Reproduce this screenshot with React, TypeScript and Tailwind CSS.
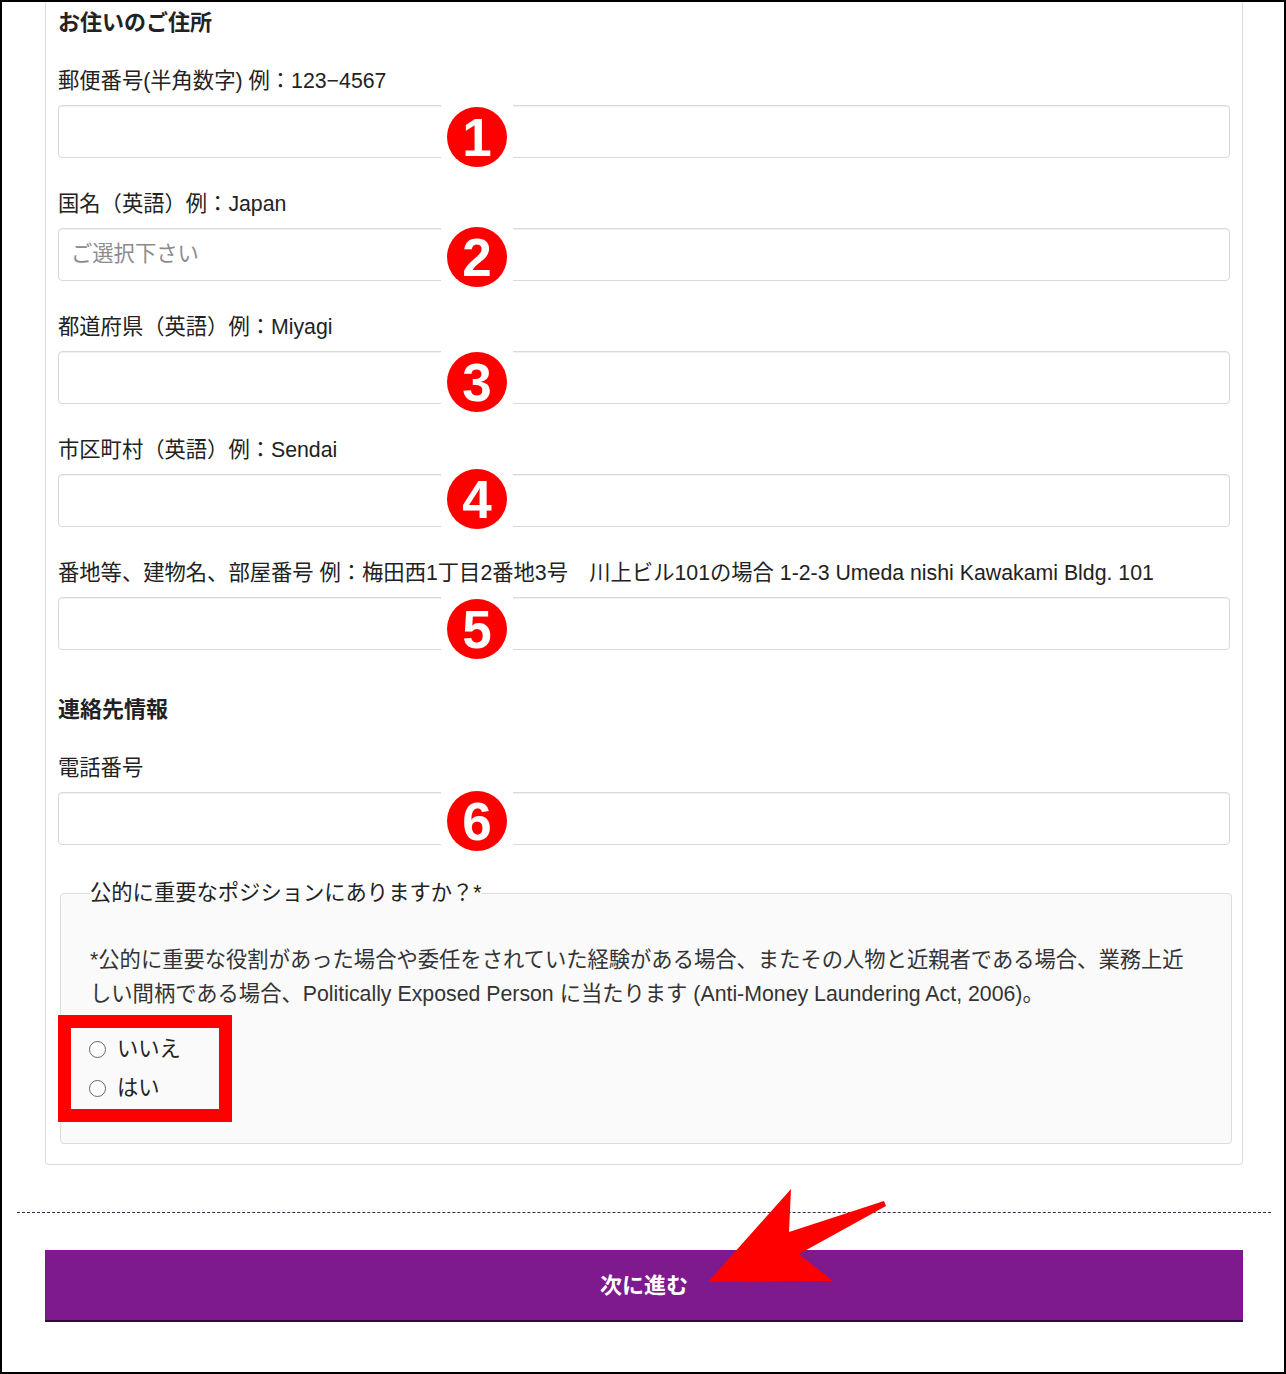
import React from "react";

interface Field {
  label: string;
  badge: string;
  badgeTop: string;
  placeholder?: string;
}

const fields: Field[] = [
  { label: "郵便番号(半角数字) 例：123−4567", badge: "1", badgeTop: "top-[-4px]" },
  { label: "国名（英語）例：Japan", badge: "2", badgeTop: "top-[-7px]", placeholder: "ご選択下さい" },
  { label: "都道府県（英語）例：Miyagi", badge: "3", badgeTop: "top-[-5px]" },
  { label: "市区町村（英語）例：Sendai", badge: "4", badgeTop: "top-[-11px]" },
  {
    label: "番地等、建物名、部屋番号 例：梅田西1丁目2番地3号　川上ビル101の場合 1-2-3 Umeda nishi Kawakami Bldg. 101",
    badge: "5",
    badgeTop: "top-[-4px]",
  },
];

// red numbered marker pasted on top of the screenshot
function Badge({ n, top }: { n: string; top: string }) {
  return (
    <div className={`absolute left-[383px] ${top} w-[72px] h-[72px] bg-white flex items-center justify-center`}>
      <div className="w-[60px] h-[60px] rounded-full bg-[#ff0000] flex items-center justify-center text-white font-bold text-[53px] leading-none">
        {n}
      </div>
    </div>
  );
}

function TextInput({ placeholder }: { placeholder?: string }) {
  return (
    <input
      type="text"
      placeholder={placeholder}
      className="block w-full h-[53px] rounded-[4px] border border-[#d9d9d9] bg-white px-[12px] text-[21.3px] text-[#222] placeholder:text-[#8c8c8c] shadow-[inset_0_1px_1px_rgba(0,0,0,0.06)] outline-none"
    />
  );
}

export default function App() {
  return (
    <div className="relative w-[1286px] h-[1374px] overflow-hidden border-2 border-black bg-white font-['Liberation_Sans','Noto_Sans_CJK_JP',sans-serif] text-[#222]">
      <div className="ml-[43px] mr-[41px] rounded-b-[4px] border-x border-b border-[#dddddd] px-[12px] pt-[6px] pb-[20px]">
        <h2 className="text-[22px] leading-[30px] font-bold">お住いのご住所</h2>

        <div className="mt-[28px] flex flex-col gap-[31px]">
          {fields.map((f) => (
            <div key={f.badge}>
              <label className="block text-[21.3px] leading-[30px]">{f.label}</label>
              <div className="relative mt-[9px]">
                <TextInput placeholder={f.placeholder} />
                <Badge n={f.badge} top={f.badgeTop} />
              </div>
            </div>
          ))}
        </div>

        <h2 className="mt-[45px] text-[22px] leading-[30px] font-bold">連絡先情報</h2>
        <div className="mt-[28px]">
          <label className="block text-[21.3px] leading-[30px]">電話番号</label>
          <div className="relative mt-[9px]">
            <TextInput />
            <Badge n="6" top="top-[-7px]" />
          </div>
        </div>

        <fieldset className="mt-[33px] ml-[2px] -mr-[2px] rounded-[4px] border border-[#dddddd] bg-[#fafafa] px-[29px] pb-[35px]">
          <legend className="text-[21.3px] leading-[30px] text-[#222]">公的に重要なポジションにありますか？*</legend>
          <p className="mt-[35px] text-[21.3px] leading-[34px] text-[#333]">
            *公的に重要な役割があった場合や委任をされていた経験がある場合、またその人物と近親者である場合、業務上近
            <br />
            しい間柄である場合、Politically Exposed Person に当たります (Anti-Money Laundering Act, 2006)。
          </p>
          <div className="relative mt-[19px]">
            {["いいえ", "はい"].map((v) => (
              <label key={v} className="flex h-[39px] items-center text-[21.3px] text-[#222]">
                <input
                  type="radio"
                  name="pep"
                  className="appearance-none w-[17px] h-[17px] -ml-[1px] rounded-full border border-[#666] bg-white"
                />
                <span className="ml-[11px]">{v}</span>
              </label>
            ))}
            <div className="pointer-events-none absolute left-[-32px] top-[-15px] w-[174px] h-[107px] border-[13px] border-[#ff0000]" />
          </div>
        </fieldset>
      </div>

      <div className="mt-[47px] ml-[15px] mr-[13px] border-t border-dashed border-[#3b2a4e]" />

      <button
        type="button"
        className="mt-[37px] ml-[43px] flex h-[72px] w-[1198px] items-center justify-center border-b-2 border-[#2b0d35] bg-[#7e1a8e] text-[22px] font-bold text-white"
      >
        次に進む
      </button>

      <svg
        className="pointer-events-none absolute left-[700px] top-[1180px]"
        width="190"
        height="106"
        viewBox="0 0 190 106"
      >
        <polygon points="6,100 89,7 87,50 182,19 184,24 97,72 131,99" fill="#ff0000" />
      </svg>
    </div>
  );
}
